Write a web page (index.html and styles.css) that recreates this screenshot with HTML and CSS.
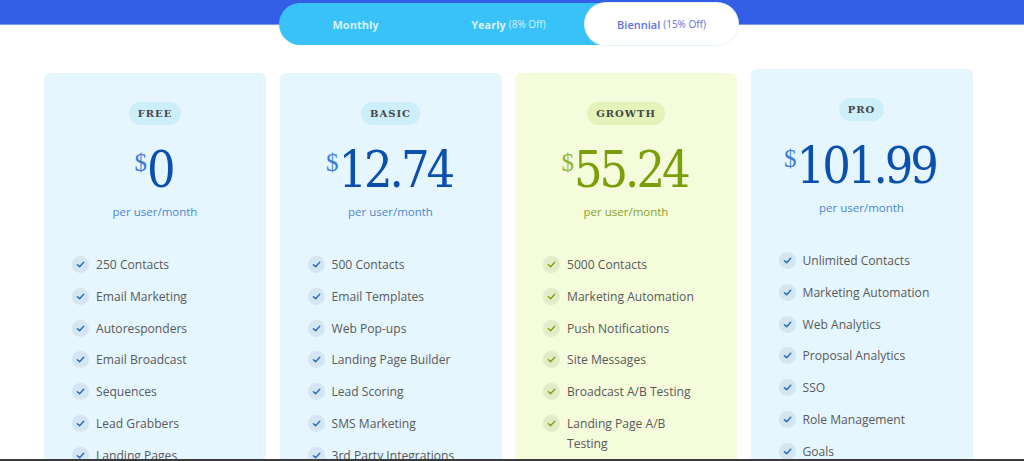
FILE: index.html
```html
<!DOCTYPE html>
<html lang="en">
<head>
<meta charset="utf-8">
<title>Pricing</title>
<link rel="stylesheet" href="styles.css">
</head>
<body>
<div class="page">
  <div class="toggle">
    <div class="seg">Monthly</div>
    <div class="seg">Yearly <small>(8% Off)</small></div>
    <div class="seg active">Biennial <small>(15% Off)</small></div>
  </div>

  <div class="plans">
    <div class="card blue">
      <span class="badge">FREE</span>
      <div class="price"><span class="cur">$</span><span class="amt">0</span></div>
      <div class="per">per user/month</div>
      <ul class="features">
        <li><span class="chk"></span>250 Contacts</li>
        <li><span class="chk"></span>Email Marketing</li>
        <li><span class="chk"></span>Autoresponders</li>
        <li><span class="chk"></span>Email Broadcast</li>
        <li><span class="chk"></span>Sequences</li>
        <li><span class="chk"></span>Lead Grabbers</li>
        <li><span class="chk"></span>Landing Pages</li>
      </ul>
    </div>
    <div class="card blue">
      <span class="badge">BASIC</span>
      <div class="price"><span class="cur">$</span><span class="amt">12.74</span></div>
      <div class="per">per user/month</div>
      <ul class="features">
        <li><span class="chk"></span>500 Contacts</li>
        <li><span class="chk"></span>Email Templates</li>
        <li><span class="chk"></span>Web Pop-ups</li>
        <li><span class="chk"></span>Landing Page Builder</li>
        <li><span class="chk"></span>Lead Scoring</li>
        <li><span class="chk"></span>SMS Marketing</li>
        <li><span class="chk"></span>3rd Party Integrations</li>
      </ul>
    </div>
    <div class="card green">
      <span class="badge">GROWTH</span>
      <div class="price"><span class="cur">$</span><span class="amt">55.24</span></div>
      <div class="per">per user/month</div>
      <ul class="features">
        <li><span class="chk"></span>5000 Contacts</li>
        <li><span class="chk"></span>Marketing Automation</li>
        <li><span class="chk"></span>Push Notifications</li>
        <li><span class="chk"></span>Site Messages</li>
        <li><span class="chk"></span>Broadcast A/B Testing</li>
        <li><span class="chk"></span>Landing Page A/B Testing</li>
      </ul>
    </div>
    <div class="card blue raised">
      <span class="badge">PRO</span>
      <div class="price"><span class="cur">$</span><span class="amt">101.99</span></div>
      <div class="per">per user/month</div>
      <ul class="features">
        <li><span class="chk"></span>Unlimited Contacts</li>
        <li><span class="chk"></span>Marketing Automation</li>
        <li><span class="chk"></span>Web Analytics</li>
        <li><span class="chk"></span>Proposal Analytics</li>
        <li><span class="chk"></span>SSO</li>
        <li><span class="chk"></span>Role Management</li>
        <li><span class="chk"></span>Goals</li>
      </ul>
    </div>
  </div>
</div>
<div class="frame-edge"></div>
</body>
</html>
```

FILE: styles.css
```css
html, body {
  margin: 0;
  padding: 0;
  height: 461px;
  overflow: hidden;
  background: #ffffff;
  font-family: "Open Sans", "Noto Sans", sans-serif;
}

.page {
  background: linear-gradient(to bottom, #335fe6 0, #335fe6 24px, #7c98f0 24px, #7c98f0 25px, #ffffff 25px);
  padding-top: 3px;
}

.toggle {
  display: flex;
  width: 459px;
  height: 42px;
  margin-left: 279px;
  border-radius: 21px;
  background: #38c2f8;
}

.seg {
  flex: none;
  width: 153px;
  box-sizing: border-box;
  display: flex;
  align-items: center;
  justify-content: center;
  font-size: 11px;
  font-weight: 700;
  color: #d8f1fd;
  border-radius: 21px;
}

.seg small {
  font-size: 10px;
  font-weight: 400;
  margin-left: 3px;
}

.seg.active {
  background: #ffffff;
  color: #5e70e0;
  font-weight: 600;
  box-shadow: 0 0 0 1px #e6f2fa;
}

.plans {
  display: flex;
  align-items: flex-start;
  gap: 13.5px;
  margin-left: 44px;
  margin-top: 24px;
}

.card {
  width: 222px;
  flex: none;
  box-sizing: border-box;
  padding: 27px 28px 0 28px;
  border-radius: 6px;
  margin-top: 4px;
  height: 420px;
  text-align: center;
}

.card.raised { margin-top: 0; }

.card.blue { background: #e5f6fe; }
.card.green { background: #f4fcdb; }

.badge {
  display: inline-block;
  height: 23px;
  line-height: 23px;
  padding: 0 9px;
  border-radius: 12px;
  font-family: "DejaVu Serif", serif;
  font-weight: 700;
  font-size: 10px;
  letter-spacing: 1px;
  color: #474747;
}

.blue .badge { background: #cdeefb; }
.green .badge { background: #e3f3b9; }

.price {
  display: flex;
  justify-content: center;
  align-items: flex-start;
  margin-top: 17px;
  font-family: "DejaVu Serif Condensed", "DejaVu Serif", serif;
}

.amt {
  font-size: 50px;
  line-height: 56px;
  letter-spacing: -3px;
  margin-right: 3px;
}

.cur {
  font-family: "Liberation Serif", serif;
  font-size: 25px;
  line-height: 22px;
  margin-top: 10px;
  margin-right: 0;
}

.blue .amt { color: #0b4faf; }
.blue .cur { color: #3b7dd6; }
.green .amt { color: #7b9f08; }
.green .cur { color: #93b332; }

.per {
  margin-top: 6px;
  font-size: 11.5px;
  line-height: 16px;
}

.blue .per { color: #4f86d2; }
.green .per { color: #86a32a; }

.features {
  list-style: none;
  margin: 35px 0 0 0;
  padding: 0;
  text-align: left;
}

.features li {
  display: flex;
  align-items: flex-start;
  font-size: 12.1px;
  line-height: 20px;
  color: #5a5a5a;
  margin-bottom: 11.8px;
}

.chk {
  flex: none;
  width: 17px;
  height: 17px;
  border-radius: 50%;
  margin-top: 1px;
  margin-right: 7px;
  background-repeat: no-repeat;
  background-position: center;
  background-size: 9px 9px;
}

.blue .chk {
  background-color: #d3e6f1;
  background-image: url("data:image/svg+xml;utf8,<svg xmlns='http://www.w3.org/2000/svg' viewBox='0 0 10 10'><path d='M1.5 5.2 L4 7.4 L8.6 2.6' fill='none' stroke='%232b6ac5' stroke-width='1.6' stroke-linecap='round' stroke-linejoin='round'/></svg>");
}

.green .chk {
  background-color: #e3ecc8;
  background-image: url("data:image/svg+xml;utf8,<svg xmlns='http://www.w3.org/2000/svg' viewBox='0 0 10 10'><path d='M1.5 5.2 L4 7.4 L8.6 2.6' fill='none' stroke='%237fa318' stroke-width='1.6' stroke-linecap='round' stroke-linejoin='round'/></svg>");
}

.frame-edge {
  position: fixed;
  left: 0;
  right: 0;
  bottom: 0;
  height: 2px;
  background: #3a3a3a;
}
```
